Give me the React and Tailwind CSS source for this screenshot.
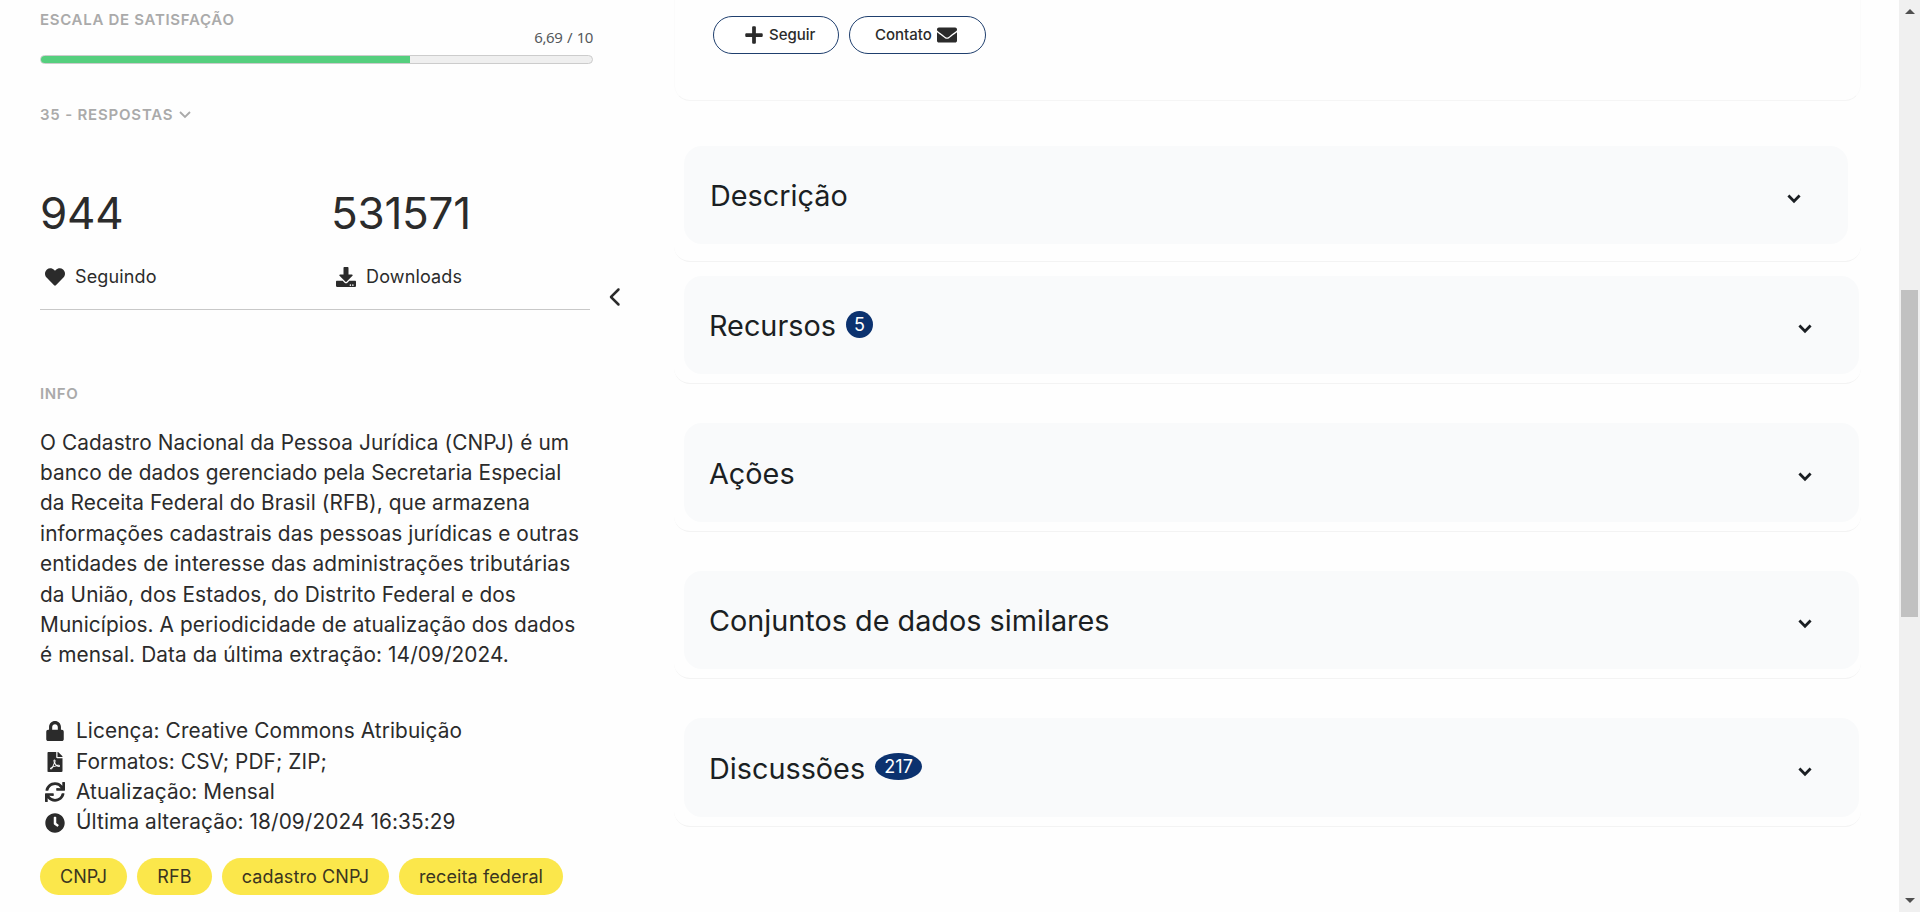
import { FaHeart, FaDownload, FaLock, FaFilePdf, FaClock, FaPlus, FaEnvelope, FaSync } from "react-icons/fa";
import { FaChevronLeft } from "react-icons/fa6";

const INFO_LINES = [
  "O Cadastro Nacional da Pessoa Jurídica (CNPJ) é um",
  "banco de dados gerenciado pela Secretaria Especial",
  "da Receita Federal do Brasil (RFB), que armazena",
  "informações cadastrais das pessoas jurídicas e outras",
  "entidades de interesse das administrações tributárias",
  "da União, dos Estados, do Distrito Federal e dos",
  "Municípios. A periodicidade de atualização dos dados",
  "é mensal. Data da última extração: 14/09/2024.",
];

const META = [
  { icon: <FaLock className="h-5 w-5" />, text: "Licença: Creative Commons Atribuição" },
  { icon: <FaFilePdf className="h-5 w-5" />, text: "Formatos: CSV; PDF; ZIP;" },
  { icon: <FaSync className="h-5 w-5" />, text: "Atualização: Mensal" },
  { icon: <FaClock className="h-5 w-5" />, text: "Última alteração: 18/09/2024 16:35:29" },
];

const TAGS = [
  { label: "CNPJ", width: "w-[87px]" },
  { label: "RFB", width: "w-[75px]" },
  { label: "cadastro CNPJ", width: "w-[167px]" },
  { label: "receita federal", width: "w-[164px]" },
];

function Label({ children, className }) {
  return (
    <div className={`flex h-6 items-center text-[15px] leading-6 font-semibold text-[#aaaaaa] ${className}`}>
      {children}
    </div>
  );
}

function Stat({ value, icon, label }) {
  return (
    <div>
      <div className="h-14 text-[44px] leading-14 tracking-[-0.25px]">{value}</div>
      <div className="mt-[22px] flex h-7 items-center text-[18px] leading-7 tracking-[0.15px]">
        <span className="mr-2.5 ml-[5px]">{icon}</span>
        {label}
      </div>
    </div>
  );
}

function Sidebar() {
  return (
    <aside className="w-[553px] shrink-0">
      <Label className="mt-2 tracking-[0.7px]">ESCALA DE SATISFAÇÃO</Label>
      <div className="-mt-[5px] h-5 text-right font-['Noto_Sans',sans-serif] text-[15px] leading-5 tracking-[-0.4px] [word-spacing:1px] text-[#55595c]">6,69 / 10</div>
      <div className="mt-2 h-[9px] overflow-hidden rounded-full border border-[#cccccc] bg-[#efefef]">
        <div className="-m-px h-[9px] w-[370px] bg-[#55cf7e]" />
      </div>
      <Label className="mt-[39px] tracking-[0.8px]">
        35 - RESPOSTAS
        <svg viewBox="0 0 12 8" className="ml-1.5 h-2 w-3" fill="none" stroke="currentColor" strokeWidth="1.8">
          <path d="M1 1l5 5 5-5" />
        </svg>
      </Label>
      <div className="mt-[58px] grid grid-cols-[291px_1fr]">
        <Stat value="944" icon={<FaHeart className="h-5 w-5" />} label="Seguindo" />
        <Stat value="531571" icon={<FaDownload className="h-5 w-5" />} label="Downloads" />
      </div>
      <div className="mt-[18px] w-[550px] border-t border-[#c8c8c8]" />
      <Label className="mt-[72px] tracking-[0.6px]">INFO</Label>
      <p className="mt-[21.6px] text-[20.8px] leading-[30.4px] tracking-[0.1px] whitespace-nowrap">
        {INFO_LINES.map((line) => (
          <span key={line} className="block">{line}</span>
        ))}
      </p>
      <ul className="mt-[45.4px] text-[20.8px] leading-[30.4px] tracking-[0.1px] whitespace-nowrap">
        {META.map(({ icon, text }) => (
          <li key={text} className="flex items-center">
            <span className="mr-[11px] ml-[5px]">{icon}</span>
            {text}
          </li>
        ))}
      </ul>
      <div className="mt-5 flex gap-2.5">
        {TAGS.map(({ label, width }) => (
          <span key={label} className={`${width} h-[37px] rounded-full bg-[#fbe74b] text-center text-[18px] leading-[37px] tracking-[0.1px] text-[#3a3520]`}>
            {label}
          </span>
        ))}
      </div>
    </aside>
  );
}

function Section({ title, badge, badgeWidth, className, panel }) {
  return (
    <section className={`rounded-b-2xl border-b border-[#f3f3f3] pl-2.5 ${className}`}>
      <div className={`flex items-center justify-between rounded-[18px] bg-[#f9fafb] pr-[47px] text-[#1b1f23] ${panel}`}>
        <h2 className="flex items-center pt-0.5 text-[28.8px] leading-10">
          {title}
          {badge && (
            <span className={`${badgeWidth} mb-1 ml-2.5 h-[27px] rounded-[50%] bg-[#0c326f] text-center text-[18px] leading-[27px] text-white`}>
              {badge}
            </span>
          )}
        </h2>
        <svg viewBox="0 0 14 10" className="mt-2 h-2.5 w-3.5" fill="none" stroke="currentColor" strokeWidth="2.8">
          <path d="M1.4 1.6 7 7.2l5.6-5.6" />
        </svg>
      </div>
    </section>
  );
}

function Scrollbar() {
  return (
    <div className="flex w-[21px] flex-col items-center bg-[#f0f0f0]">
      <svg width="10" height="5" className="mt-[9px]" fill="#505050"><path d="M0 5 5 0l5 5z" /></svg>
      <div className="mt-[276px] h-[327px] w-[17px] bg-[#c1c1c1]" />
      <svg width="10" height="5" className="mt-auto mb-[9px]" fill="#505050"><path d="M0 0h10L5 5z" /></svg>
    </div>
  );
}

export default function App() {
  return (
    <div className="flex h-[912px] overflow-hidden bg-[#fefefe] pl-10 font-['Inter',sans-serif] text-[#2b2b2b]">
      <Sidebar />
      <FaChevronLeft className="mt-[287px] ml-[12.5px] h-5 w-5 shrink-0" />
      <main className="ml-[48.5px] w-[1187px] shrink-0">
        <div className="h-[101px] rounded-b-2xl border-x border-b border-[#f5f5f5] border-x-[#fbfbfb] pt-4 pl-[38px]">
          <div className="flex gap-2.5 text-[15px] font-medium">
            <button className="flex h-[38px] w-[126px] items-center rounded-full border border-[#1f3f6e] bg-white pl-[30px]">
              <FaPlus className="mr-[5px] h-5 w-5" />
              Seguir
            </button>
            <button className="flex h-[38px] w-[137px] items-center rounded-full border border-[#1f3f6e] bg-white pl-[25px]">
              Contato
              <FaEnvelope className="ml-[5px] h-5 w-5" />
            </button>
          </div>
        </div>
        <Section title="Descrição" className="mt-[45px] h-[116px]" panel="h-[98px] w-[1164px] pl-[26px]" />
        <Section title="Recursos" badge="5" badgeWidth="w-[27px]" className="mt-3.5 h-[108px]" panel="h-[98px] w-[1175px] pl-[25px]" />
        <Section title="Ações" className="mt-[39px] h-[109px]" panel="h-[99px] w-[1175px] pl-[25px]" />
        <Section title="Conjuntos de dados similares" className="mt-[39px] h-[108px]" panel="h-[98px] w-[1175px] pl-[25px]" />
        <Section title="Discussões" badge="217" badgeWidth="w-[47px]" className="mt-[39px] h-[109px]" panel="h-[99px] w-[1175px] pl-[25px]" />
      </main>
      <div className="ml-auto flex">
        <Scrollbar />
      </div>
    </div>
  );
}
